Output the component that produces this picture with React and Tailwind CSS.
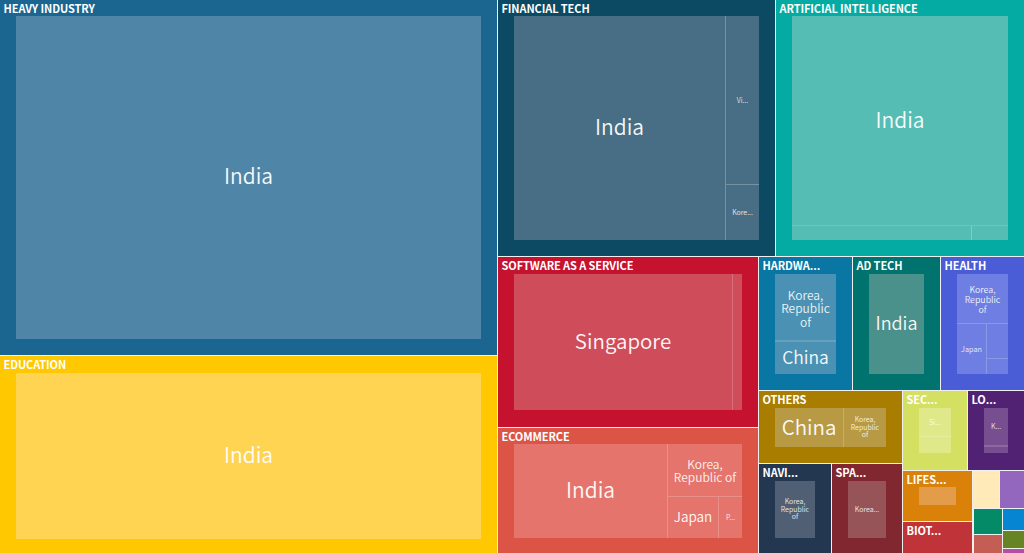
const font = "font-['Noto_Sans_CJK_SC','Noto_Sans',sans-serif]";

function Tile({ label, className = "", inner = "", labelH = "h-[16px]", children }) {
  return (
    <div className={`flex flex-col shrink-0 ${className}`}>
      <div className={`${labelH} shrink-0 pl-[3.5px] text-[11px] leading-[16px] font-bold tracking-[-0.1px] text-white whitespace-nowrap overflow-hidden`}>
        {label}
      </div>
      <div className={`flex-1 min-h-0 mx-[16px] flex text-white overflow-hidden ${inner}`}>
        {children}
      </div>
    </div>
  );
}

function Leaf({ className = "", children }) {
  return (
    <div className={`flex items-center justify-center text-center font-[350] min-w-0 min-h-0 ${className}`}>
      {children}
    </div>
  );
}

export default function App() {
  return (
    <div className={`w-[1024px] h-[553px] bg-[#f0f0f0] flex gap-px overflow-hidden ${font}`}>
      {/* left column */}
      <div className="w-[497px] shrink-0 flex flex-col gap-px">
        <Tile label="HEAVY INDUSTRY" className="h-[355px] bg-[#1a6690]" inner="mb-[16px] bg-[#4f85a6]">
          <Leaf className="flex-1 text-[21px] pb-[3px] opacity-95">India</Leaf>
        </Tile>
        <Tile label="EDUCATION" labelH="h-[17px]" className="h-[197px] bg-[#ffc800]" inner="mb-[14px] bg-[#ffd452]">
          <Leaf className="flex-1 text-[21px] pb-[3px] opacity-95">India</Leaf>
        </Tile>
      </div>

      {/* right area */}
      <div className="w-[526px] shrink-0 flex flex-col gap-px">
        <div className="h-[256px] shrink-0 flex gap-px">
          <Tile label="FINANCIAL TECH" className="w-[277px] bg-[#0c4a63]" inner="mb-[16px] bg-[#476e84]">
            <Leaf className="flex-1 text-[21px] pb-[3px] opacity-95">India</Leaf>
            <div className="w-[34px] shrink-0 flex flex-col border-l border-white/25">
              <Leaf className="h-[169px] shrink-0 text-[7px] border-b border-white/25"><span className="opacity-85">Vi...</span></Leaf>
              <Leaf className="flex-1 text-[7px]"><span className="opacity-85">Kore...</span></Leaf>
            </div>
          </Tile>
          <Tile label="ARTIFICIAL INTELLIGENCE" className="flex-1 bg-[#04aba2]" inner="mb-[16px] bg-[#56bdb5]">
            <div className="flex-1 flex flex-col">
              <Leaf className="flex-1 text-[21px] pb-[1px] border-b border-white/15">
                <span className="opacity-95">India</span>
              </Leaf>
              <div className="h-[14px] shrink-0 flex">
                <div className="w-[180px] border-r border-white/25" />
                <div className="flex-1" />
              </div>
            </div>
          </Tile>
        </div>

        <div className="flex-1 min-h-0 flex gap-px">
          <div className="w-[260px] shrink-0 flex flex-col gap-px">
            <Tile label="SOFTWARE AS A SERVICE" labelH="h-[17px]" className="h-[170px] bg-[#c4122f]" inner="mb-[17px] bg-[#cf4c5a]">
              <Leaf className="flex-1 text-[20.5px] pb-[3px] opacity-95">Singapore</Leaf>
              <div className="w-[10px] shrink-0 border-l border-white/20" />
            </Tile>
            <Tile label="ECOMMERCE" className="flex-1 bg-[#dc5445]" inner="mb-[15px] bg-[#e5756c]">
              <Leaf className="flex-1 text-[21px] pb-[3px] opacity-95">India</Leaf>
              <div className="w-[75px] shrink-0 flex flex-col border-l border-white/20">
                <Leaf className="h-[53px] shrink-0 text-[12px] leading-[13.5px] border-b border-white/20">
                  <span className="opacity-90">Korea,<br />Republic of</span>
                </Leaf>
                <div className="flex-1 flex">
                  <Leaf className="w-[51px] shrink-0 text-[13.5px] border-r border-white/20 pb-[2px]">
                    <span className="opacity-95">Japan</span>
                  </Leaf>
                  <Leaf className="flex-1 text-[7px]"><span className="opacity-85">P...</span></Leaf>
                </div>
              </div>
            </Tile>
          </div>

          <div className="w-[265px] shrink-0 flex flex-col gap-px">
            <div className="h-[133px] shrink-0 flex gap-px">
              <Tile label="HARDWA..." labelH="h-[17px]" className="w-[93px] bg-[#0a76a3]" inner="mb-[16px] bg-[#4a91b4]">
                <div className="flex-1 flex flex-col">
                  <Leaf className="flex-1 text-[12px] leading-[13.5px] pt-[2px] border-b-2 border-white/15">
                    <span className="opacity-90">Korea,<br />Republic<br />of</span>
                  </Leaf>
                  <Leaf className="h-[32px] shrink-0 text-[17.5px] pb-[2px] opacity-95">China</Leaf>
                </div>
              </Tile>
              <Tile label="AD TECH" labelH="h-[17px]" className="w-[87px] bg-[#01736e]" inner="mb-[16px] bg-[#4a908b]">
                <Leaf className="flex-1 text-[18px] pb-[3px] opacity-95">India</Leaf>
              </Tile>
              <Tile label="HEALTH" labelH="h-[17px]" className="flex-1 bg-[#4a5cd6]" inner="mb-[16px] bg-[#6e7ee2]">
                <div className="flex-1 flex flex-col">
                  <Leaf className="h-[50px] shrink-0 text-[8.8px] leading-[10px] pt-[2px] border-b border-white/20">
                    <span className="opacity-90">Korea,<br />Republic<br />of</span>
                  </Leaf>
                  <div className="flex-1 flex">
                    <Leaf className="w-[30px] shrink-0 text-[7.3px] border-r border-white/20">
                      <span className="opacity-85">Japan</span>
                    </Leaf>
                    <div className="flex-1 flex flex-col">
                      <div className="h-[35px] shrink-0 border-b border-white/20" />
                      <div className="flex-1" />
                    </div>
                  </div>
                </div>
              </Tile>
            </div>

            <div className="flex-1 min-h-0 flex gap-px">
              <div className="w-[143px] shrink-0 flex flex-col gap-px">
                <Tile label="OTHERS" labelH="h-[17px]" className="h-[72px] bg-[#a97e00]" inner="mb-[16px] bg-[#b89a44]">
                  <Leaf className="flex-1 text-[20.5px] pb-[2px] opacity-95">China</Leaf>
                  <Leaf className="w-[43px] shrink-0 text-[7px] leading-[7.7px] border-l border-white/20">
                    <span className="opacity-85">Korea,<br />Republic<br />of</span>
                  </Leaf>
                </Tile>
                <div className="flex-1 min-h-0 flex gap-px">
                  <Tile label="NAVI..." labelH="h-[17px]" className="w-[72px] bg-[#233750]" inner="mb-[15px] bg-[#515f74]">
                    <Leaf className="flex-1 text-[7px] leading-[7.7px]">
                      <span className="opacity-85">Korea,<br />Republic<br />of</span>
                    </Leaf>
                  </Tile>
                  <Tile label="SPA..." labelH="h-[17px]" className="flex-1 bg-[#812730]" inner="mb-[15px] bg-[#965459]">
                    <Leaf className="flex-1 text-[7px]"><span className="opacity-85">Korea...</span></Leaf>
                  </Tile>
                </div>
              </div>

              <div className="flex-1 min-w-0 flex flex-col gap-px">
                <div className="h-[79px] shrink-0 flex gap-px">
                  <Tile label="SEC..." labelH="h-[17px]" className="w-[64px] bg-[#d3e061]" inner="mb-[17px] bg-[#dfe98a]">
                    <div className="flex-1 flex flex-col">
                      <Leaf className="flex-1 text-[7px] border-b border-white/20"><span className="opacity-85">Si...</span></Leaf>
                      <div className="h-[16px] shrink-0" />
                    </div>
                  </Tile>
                  <Tile label="LO..." labelH="h-[17px]" className="flex-1 bg-[#512273]" inner="mb-[17px] bg-[#774f90]">
                    <div className="flex-1 flex flex-col">
                      <Leaf className="flex-1 text-[7px] border-b-2 border-white/15"><span className="opacity-85">K...</span></Leaf>
                      <div className="h-[6px] shrink-0" />
                    </div>
                  </Tile>
                </div>

                <div className="flex-1 min-h-0 flex gap-px">
                  <div className="w-[69px] shrink-0 flex flex-col gap-px">
                    <Tile label="LIFES..." className="h-[50px] bg-[#d98108]" inner="mb-[16px] bg-[#e29c4a]" />
                    <Tile label="BIOT..." className="flex-1 bg-[#bf3339]" />
                  </div>
                  <div className="flex-1 min-w-0 flex flex-col gap-px">
                    <div className="h-[37px] shrink-0 flex gap-px">
                      <div className="w-[26px] shrink-0 bg-[#ffeab8]" />
                      <div className="flex-1 bg-[#9467be]" />
                    </div>
                    <div className="flex-1 min-h-0 flex gap-px pl-px">
                      <div className="w-[28px] shrink-0 flex flex-col gap-px">
                        <div className="h-[25px] shrink-0 bg-[#048a66]" />
                        <div className="flex-1 bg-[#c45d54]" />
                      </div>
                      <div className="flex-1 min-w-0 flex flex-col gap-px">
                        <div className="h-[21px] shrink-0 bg-[#0585d2]" />
                        <div className="h-[17px] shrink-0 bg-[#668424]" />
                        <div className="flex-1 bg-[#b34fa0]" />
                      </div>
                    </div>
                  </div>
                </div>
              </div>
            </div>
          </div>
        </div>
      </div>
    </div>
  );
}
